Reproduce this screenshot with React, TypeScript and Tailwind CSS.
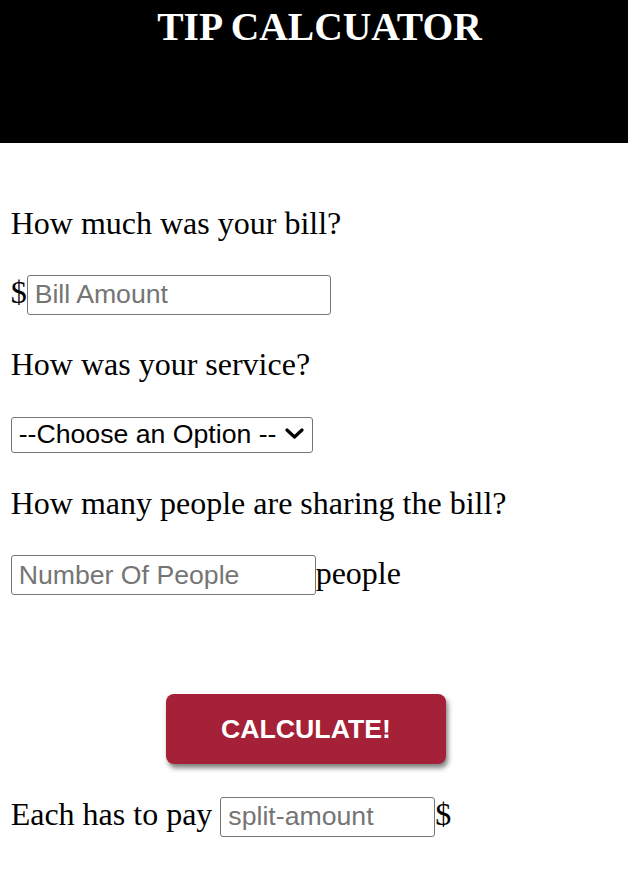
import React from 'react';

const inputCls =
  "h-[40px] rounded-[3px] border border-[#767676] bg-white px-[7px] font-['Liberation_Sans',Arial,sans-serif] text-[26.67px] leading-normal text-black outline-none placeholder:text-[#757575]";

export default function App() {
  return (
    <div className="min-h-screen bg-white font-['Liberation_Serif','Times_New_Roman',serif] text-black">
      {/* Header */}
      <header className="h-[143px] bg-black pl-[11px] text-center">
        <h1 className="pt-[7px] text-[39.5px] font-bold leading-[40px] text-white">TIP CALCUATOR</h1>
      </header>

      <main className="pl-[10.67px] pb-[40px] text-[32px] leading-[36px]">
        <p className="mt-[62px]">How much was your bill?</p>
        <div className="mt-[33px] flex items-baseline">
          <span>$</span>
          <input className={`${inputCls} w-[304px]`} placeholder="Bill Amount" />
        </div>

        <p className="mt-[31px]">How was your service?</p>
        <div className="relative mt-[35px] w-[302px]">
          <select
            defaultValue=""
            className="block h-[36px] w-[302px] appearance-none rounded-[3px] border border-[#767676] bg-white pb-[1px] pl-[7px] pr-[30px] font-['Liberation_Sans',Arial,sans-serif] text-[26.67px] leading-[28px] text-black outline-none"
          >
            <option value="">--Choose an Option --</option>
            <option value="0.3">30% - Outstanding</option>
            <option value="0.2">20% - Good</option>
            <option value="0.15">15% - It was OK</option>
            <option value="0.1">10% - Bad</option>
            <option value="0.05">5% - Terrible</option>
          </select>
          <svg
            className="pointer-events-none absolute right-[9px] top-[11px]"
            width="19"
            height="12"
            viewBox="0 0 19 12"
            fill="none"
          >
            <polyline points="2,2 9.5,9 17,2" stroke="#000" strokeWidth="3.2" strokeLinecap="round" strokeLinejoin="round" />
          </svg>
        </div>

        <p className="mt-[32px]">How many people are sharing the bill?</p>
        <div className="mt-[34px] flex items-baseline">
          <input className={`${inputCls} w-[305px]`} placeholder="Number Of People" />
          <span>people</span>
        </div>

        {/* Calculate button */}
        <button className="ml-[155.3px] mt-[99px] flex h-[70px] w-[280px] items-center justify-center rounded-[8px] bg-[#a42138] font-['Liberation_Sans',Arial,sans-serif] text-[26.67px] font-bold text-white shadow-[2px_4px_5px_rgba(0,0,0,0.5)]">
          CALCULATE!
        </button>

        <div className="mt-[32px] flex items-baseline">
          <span>Each has to pay&nbsp;</span>
          <input className={`${inputCls} w-[215px]`} placeholder="split-amount" />
          <span>$</span>
        </div>
      </main>
    </div>
  );
}
